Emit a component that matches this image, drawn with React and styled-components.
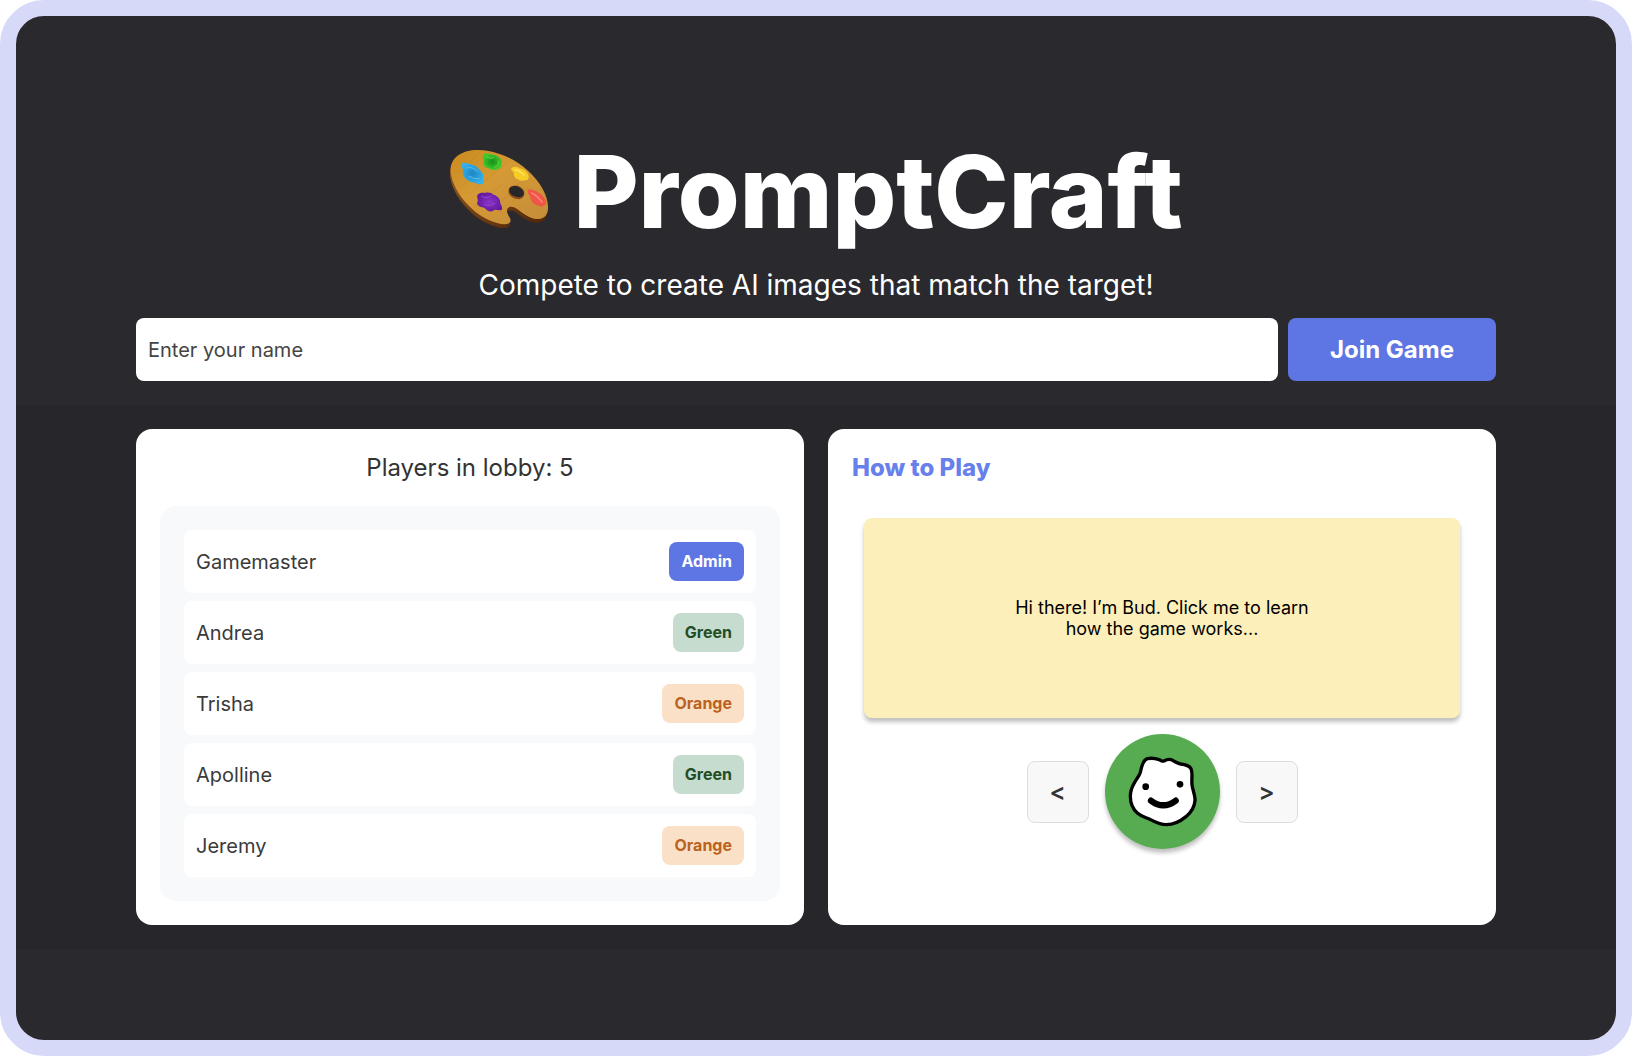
import React, { useState } from "react";
import styled, { createGlobalStyle } from "styled-components";

const GlobalStyle = createGlobalStyle`
  * {
    box-sizing: border-box;
  }
  body {
    margin: 0;
    background-color: white;
    font-family: Inter, "Liberation Sans", sans-serif;
    color: #333;
  }
  h1, h2, p, ul {
    margin: 0;
    padding: 0;
    font-weight: 400;
  }
  button, input {
    font-family: inherit;
  }
`;

const Frame = styled.div`
  min-height: 100vh;
  display: flex;
  flex-direction: column;
  justify-content: center;
  background-color: #2a292e;
  border: 16px solid #d6d9f7;
  border-radius: 44px;
`;

const Header = styled.header`
  display: flex;
  flex-direction: column;
  gap: 16px;
  padding: 24px 120px;
  color: white;
  text-align: center;
`;

const Title = styled.h1`
  display: flex;
  align-items: center;
  justify-content: center;
  gap: 24px;
  font-size: 100px;
  font-weight: 800;
  line-height: 121px;
`;

const Palette = styled.svg`
  width: 100px;
  height: 100px;
`;

const Subtitle = styled.p`
  font-size: 28px;
  line-height: 34px;
`;

const JoinForm = styled.form`
  display: flex;
  gap: 10px;
`;

const NameInput = styled.input`
  flex: 1;
  min-width: 0;
  padding: 0 12px;
  border: none;
  border-radius: 8px;
  background-color: white;
  color: #333;
  font-size: 20px;
  &::placeholder {
    color: #444;
    opacity: 1;
  }
`;

const JoinButton = styled.button`
  min-width: 208px;
  padding: 17px 40px;
  border: none;
  border-radius: 8px;
  background-color: #5e76e3;
  color: white;
  font-size: 24px;
  font-weight: 700;
  line-height: 29px;
`;

const Main = styled.main`
  display: grid;
  grid-template-columns: 1fr 1fr;
  gap: 24px;
  padding: 24px 120px;
  background-color: #27262b;
`;

const Card = styled.section`
  display: flex;
  flex-direction: column;
  gap: 24px;
  padding: 24px;
  border-radius: 16px;
  background-color: white;
`;

const CardTitle = styled.h2`
  font-size: 24px;
  line-height: 29px;
  text-align: ${(props) => (props.$accent ? "left" : "center")};
  font-weight: ${(props) => (props.$accent ? 800 : 400)};
  color: ${(props) => (props.$accent ? "#6780ec" : "#333")};
`;

const PlayerList = styled.ul`
  display: flex;
  flex-direction: column;
  gap: 8px;
  padding: 24px;
  border-radius: 16px;
  background-color: #f8f9fb;
  list-style: none;
`;

const Player = styled.li`
  display: flex;
  align-items: center;
  justify-content: space-between;
  padding: 12px;
  border-radius: 8px;
  background-color: white;
  color: #3a3a3a;
  font-size: 20px;
`;

const badgeColors = {
  Admin: { background: "#5e76e3", text: "white" },
  Green: { background: "#c6dccf", text: "#234d25" },
  Orange: { background: "#fbe0c8", text: "#bb6220" },
};

const Badge = styled.span`
  padding: 10px 12px;
  border-radius: 8px;
  background-color: ${(props) => badgeColors[props.$team].background};
  color: ${(props) => badgeColors[props.$team].text};
  font-size: 16px;
  font-weight: 700;
  line-height: 19px;
`;

const Guide = styled.div`
  display: flex;
  flex-direction: column;
  gap: 16px;
  padding: 12px;
`;

const Note = styled.div`
  display: flex;
  align-items: center;
  justify-content: center;
  height: 200px;
  border-radius: 8px;
  background-color: #fcefba;
  box-shadow: 0 4px 4px rgba(0, 0, 0, 0.25);
`;

const NoteText = styled.p`
  max-width: 300px;
  color: black;
  font-size: 18px;
  line-height: 21px;
  text-align: center;
`;

const Controls = styled.div`
  display: flex;
  align-items: center;
  justify-content: center;
  gap: 16px;
`;

const StepButton = styled.button`
  width: 62px;
  height: 62px;
  padding: 0;
  border: 1px solid #ddd;
  border-radius: 8px;
  background-color: #f8f8f8;
  color: #333;
  font-size: 24px;
  font-weight: 600;
`;

const BudButton = styled.button`
  width: 115px;
  height: 115px;
  padding: 0;
  border: none;
  border-radius: 50%;
  background-color: #57ac52;
  box-shadow: 0 4px 4px rgba(0, 0, 0, 0.25);
`;

const BudFace = styled.svg`
  display: block;
  width: 100%;
  height: 100%;
`;

const players = [
  { name: "Gamemaster", team: "Admin" },
  { name: "Andrea", team: "Green" },
  { name: "Trisha", team: "Orange" },
  { name: "Apolline", team: "Green" },
  { name: "Jeremy", team: "Orange" },
];

const PALETTE_SHAPE =
  "M38 84 C40 48 76 26 124 28 C176 30 230 54 270 90 C308 124 332 168 330 204 C328 232 308 238 288 234 C264 230 246 208 228 200 C214 195 205 202 207 214 C211 228 222 236 216 245 C208 256 178 250 152 238 C96 214 36 142 38 84 Z";

const PaletteIcon = () => (
  <Palette viewBox="33 4 300 300" aria-hidden="true">
    <defs>
      <linearGradient id="wood" x1="0" y1="0" x2="1" y2="1">
        <stop offset="0" stopColor="#c98a1c" />
        <stop offset="0.4" stopColor="#d59a35" />
        <stop offset="1" stopColor="#c58c3a" />
      </linearGradient>
      <linearGradient id="rim" x1="0" y1="0" x2="1" y2="1">
        <stop offset="0" stopColor="#9a5c20" />
        <stop offset="1" stopColor="#4d2509" />
      </linearGradient>
      <radialGradient id="blue">
        <stop offset="0" stopColor="#1c86c6" />
        <stop offset="1" stopColor="#36b0e8" />
      </radialGradient>
      <radialGradient id="green">
        <stop offset="0" stopColor="#188f18" />
        <stop offset="1" stopColor="#3fcb2c" />
      </radialGradient>
      <radialGradient id="purple">
        <stop offset="0" stopColor="#8a35c8" />
        <stop offset="1" stopColor="#651aa0" />
      </radialGradient>
    </defs>
    <path d={PALETTE_SHAPE} transform="translate(-2 11)" fill="url(#rim)" />
    <path d={PALETTE_SHAPE} fill="url(#wood)" />
    <g stroke="#b67922" strokeWidth="2" fill="none" opacity="0.45">
      <path d="M58 98 L118 44 M64 142 L150 72 M92 160 L206 68 M108 202 L192 132 M184 190 L252 118 M222 184 L270 140" />
    </g>
    <path
      d="M214 143 C222 130 247 132 257 149 C264 166 251 178 237 175 C218 172 206 158 214 143 Z"
      fill="#8a5018"
    />
    <path
      d="M215 142 C224 131 247 135 256 151 C262 166 250 172 238 169 C221 166 209 155 215 142 Z"
      fill="#29262a"
    />
    <path
      d="M69 68 C78 64 86 68 96 70 C110 74 119 78 122 85 C128 92 139 100 137 110 C135 118 139 126 133 130 C120 134 108 123 98 124 C84 118 71 106 75 92 C76 84 68 78 69 68 Z"
      fill="url(#blue)"
    />
    <path
      d="M85 82 Q104 76 118 92 M94 107 Q109 117 123 114"
      stroke="#6cc9f2"
      strokeWidth="3"
      strokeLinecap="round"
      fill="none"
      opacity="0.7"
    />
    <path
      d="M136 41 C148 34 158 42 168 42 C182 46 193 58 192 68 C192 76 188 82 182 84 C172 89 164 90 156 84 C144 82 136 76 136 67 C139 58 131 50 136 41 Z"
      fill="url(#green)"
    />
    <path
      d="M146 49 Q158 56 167 51 M181 61 Q187 74 171 79"
      stroke="#75e558"
      strokeWidth="3"
      strokeLinecap="round"
      fill="none"
      opacity="0.7"
    />
    <path
      d="M220 82 C228 76 238 78 246 83 C258 84 266 92 270 100 C275 109 272 119 264 118 C255 121 247 122 240 116 C229 112 227 106 228 98 C226 92 218 88 220 82 Z"
      fill="#f5cc28"
    />
    <path
      d="M232 87 Q248 91 258 104"
      stroke="#ffe768"
      strokeWidth="5"
      strokeLinecap="round"
      fill="none"
      opacity="0.8"
    />
    <path
      d="M119 162 C124 156 134 155 141 157 C151 154 160 156 166 162 C176 164 188 174 186 184 C188 192 197 204 190 208 C180 211 170 203 165 211 C155 216 144 207 139 201 C127 199 118 196 117 187 C124 178 114 170 119 162 Z"
      fill="url(#purple)"
    />
    <path
      d="M130 166 Q143 176 160 166 M139 191 Q154 200 170 188"
      stroke="#a95ae0"
      strokeWidth="3"
      strokeLinecap="round"
      fill="none"
      opacity="0.6"
    />
    <path
      d="M270 147 C280 144 291 150 302 156 C316 164 326 178 324 190 C318 199 306 199 298 194 C284 190 278 180 277 170 C275 162 266 156 270 147 Z"
      fill="#ef5548"
    />
    <path
      d="M281 157 Q298 165 312 184"
      stroke="#ff8f80"
      strokeWidth="5"
      strokeLinecap="round"
      fill="none"
      opacity="0.8"
    />
  </Palette>
);

const Bud = () => (
  <BudFace viewBox="43 42 345 345" aria-hidden="true">
    <path
      d="M170 116 C180 114 194 115 205 119 C211 121 215 125 220 123 C227 119 233 116 241 119 C250 122 258 130 270 132 C285 134 296 136 301 146 C307 160 302 176 304 194 C306 212 314 225 313 241 C312 262 300 278 286 290 C270 303 250 314 228 314 C207 314 194 307 180 299 C166 292 152 290 140 279 C125 266 119 248 119 229 C119 213 124 200 132 187 C138 176 146 168 149 157 C152 141 156 121 170 116 Z"
      fill="white"
      stroke="black"
      strokeWidth="10"
      strokeLinejoin="round"
    />
    <circle cx="165" cy="200" r="10" />
    <circle cx="268" cy="193" r="10" />
    <path
      d="M181 242 Q218 270 255 242"
      fill="none"
      stroke="black"
      strokeWidth="19"
      strokeLinecap="round"
    />
  </BudFace>
);

const App = () => {
  const [name, setName] = useState("");

  return (
    <>
      <GlobalStyle />
      <Frame>
        <Header>
          <Title>
            <PaletteIcon />
            PromptCraft
          </Title>
          <Subtitle>Compete to create AI images that match the target!</Subtitle>
          <JoinForm onSubmit={(e) => e.preventDefault()}>
            <NameInput
              type="text"
              aria-label="Enter your name"
              placeholder="Enter your name"
              value={name}
              onChange={(e) => setName(e.target.value)}
            />
            <JoinButton type="submit">Join Game</JoinButton>
          </JoinForm>
        </Header>
        <Main>
          <Card>
            <CardTitle>Players in lobby: {players.length}</CardTitle>
            <PlayerList>
              {players.map((player) => (
                <Player key={player.name}>
                  {player.name}
                  <Badge $team={player.team}>{player.team}</Badge>
                </Player>
              ))}
            </PlayerList>
          </Card>
          <Card>
            <CardTitle $accent>How to Play</CardTitle>
            <Guide>
              <Note>
                <NoteText>
                  Hi there! I’m Bud. Click me to learn how the game works...
                </NoteText>
              </Note>
              <Controls>
                <StepButton type="button" aria-label="Previous">&lt;</StepButton>
                <BudButton type="button" aria-label="Bud">
                  <Bud />
                </BudButton>
                <StepButton type="button" aria-label="Next">&gt;</StepButton>
              </Controls>
            </Guide>
          </Card>
        </Main>
      </Frame>
    </>
  );
};

export default App;
